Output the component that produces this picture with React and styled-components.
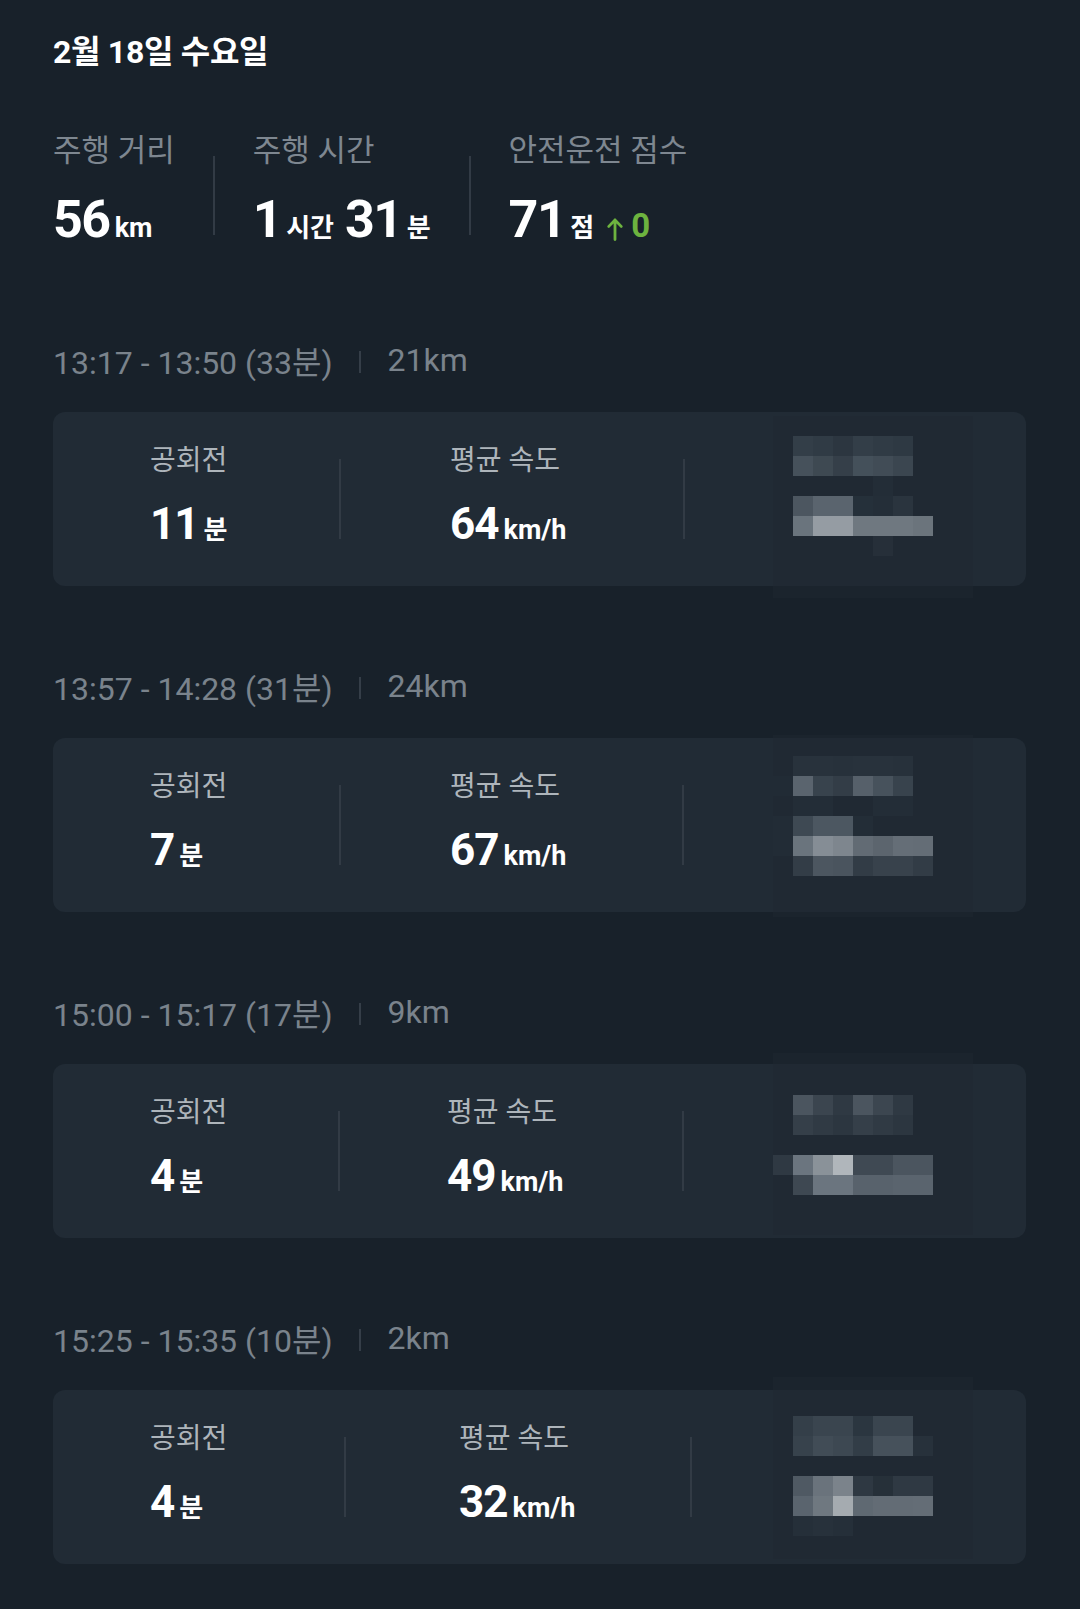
import React from "react"
import styled, { createGlobalStyle } from "styled-components"

const GlobalStyle = createGlobalStyle`
  body {
    margin: 0;
    background: #18212a;
  }
  * { box-sizing: border-box; }
`

const Page = styled.main`
  width: 1080px;
  min-height: 1609px;
  padding: 31px 54px 44px 53px;
  background: #18212a;
  color: #ffffff;
  font-family: Roboto, "Noto Sans CJK KR", sans-serif;
`

const DateTitle = styled.h1`
  margin: 0;
  font-size: 32px;
  line-height: 42px;
  font-weight: 700;
  letter-spacing: -0.3px;
`

const Summary = styled.section`
  display: flex;
  margin-top: 58px;
`

const SummaryItem = styled.div`
  display: flex;
  flex-direction: column;
  padding: 0 38px;
  &:first-child { padding-left: 0; }
`

const SummaryLabel = styled.div`
  font-size: 31px;
  line-height: 40px;
  color: #7e8790;
`

const SummaryValue = styled.div`
  display: flex;
  align-items: baseline;
  margin-top: 19px;
  height: 60px;
  line-height: 60px;
`

const BigNum = styled.span`
  font-size: 52px;
  font-weight: 700;
  letter-spacing: -1.5px;
`

const Unit = styled.span`
  font-size: ${p => p.$size || 26}px;
  font-weight: 700;
  margin-left: 5px;
  margin-right: ${p => p.$gap || 0}px;
`

const Delta = styled.span`
  display: inline-flex;
  align-items: baseline;
  margin-left: 13px;
  color: #6db33f;
  font-size: 33px;
  font-weight: 700;
  svg { margin-right: 8px; align-self: center; margin-top: 5px; }
`

const VDivider = styled.div`
  flex: none;
  width: 2px;
  height: ${p => p.$h}px;
  margin-top: ${p => p.$top}px;
  background: #323b45;
`

const Trips = styled.div`
  display: flex;
  flex-direction: column;
  gap: 80px;
  margin-top: 90px;
`

const Trip = styled.section``

const TripHeader = styled.div`
  display: flex;
  align-items: center;
  height: 40px;
  font-size: 32px;
  color: #7a838c;
`

const HeaderSep = styled.span`
  width: 2px;
  height: 22px;
  margin: 4px 27px 0 26px;
  background: #353e48;
`

const Card = styled.div`
  position: relative;
  display: flex;
  height: 174px;
  margin-top: 32px;
  border-radius: 12px;
  background: #212b35;
`

const Stat = styled.div`
  flex: none;
  width: ${p => p.$w}px;
  padding-left: ${p => p.$pad}px;
  padding-top: 31px;
`

const StatLabel = styled.div`
  font-size: 28px;
  line-height: 36px;
  color: #aeb5bb;
`

const StatValue = styled.div`
  display: flex;
  align-items: baseline;
  margin-top: 19px;
  height: 52px;
  line-height: 52px;
`

const MidNum = styled.span`
  font-size: 44px;
  font-weight: 700;
  letter-spacing: -1px;
`

// blurred map thumbnail, drawn as a mosaic over the card's right side
const Redacted = styled.div`
  position: absolute;
  left: 720px;
  top: ${p => p.$top}px;
  width: 200px;
  height: 182px;
  background: rgba(30, 39, 49, 0.45);
  svg { display: block; }
`

const ArrowUp = () => (
  <svg width="16" height="24" viewBox="0 0 16 24" fill="none">
    <path d="M8 22.5V3M1.8 9.4L8 3l6.2 6.4" stroke="#6db33f" strokeWidth="2.8" strokeLinecap="round" strokeLinejoin="round" />
  </svg>
)

const Mosaic = ({ rows, cellTop }) => (
  <svg width="200" height="182" viewBox="0 0 200 182">
    {rows.map((row, r) =>
      row.map((c, i) =>
        c ? <rect key={r + "-" + i} x={i * 20} y={cellTop + r * 20} width="20" height="20" fill={c} /> : null
      )
    )}
  </svg>
)

const trips = [
  {
    time: "13:17 - 13:50 (33분)", dist: "21km", idle: "11", speed: "64",
    cols: [286, 97, 342, 109],
    boxTop: 4, cellTop: 20,
    rows: [
      [null, "#333e48", "#303b45", "#2c3640", "#333e48", "#303b45", "#2e3943", null],
      [null, "#46515b", "#3e4952", "#353f49", "#44505a", "#414c56", "#3b4650", null],
      [null, null, null, null, null, "#232d37", null, null],
      [null, "#4c5660", "#5a646e", "#5a646e", "#25303a", "#242e38", "#2a343e", null],
      [null, "#6a747d", "#959ca3", "#959ca3", "#6f7880", "#6f7880", "#6f7880", "#6b747c"],
      [null, null, null, null, null, "#262f39", null, null],
    ],
  },
  {
    time: "13:57 - 14:28 (31분)", dist: "24km", idle: "7", speed: "67",
    cols: [286, 97, 341, 109],
    boxTop: -3, cellTop: 21,
    rows: [
      [null, "#28323c", "#28323c", "#27313b", "#28323c", "#28323c", "#27313b", null],
      ["#212b35", "#5a646e", "#38434d", "#333d47", "#56606a", "#47525c", "#38434d", null],
      [null, "#232d37", "#232d37", null, null, "#232d37", "#232d37", null],
      ["#222c36", "#3e4953", "#4c5761", "#4c5761", "#232d37", null, null, null],
      ["#222c36", "#6a747d", "#858d95", "#7e868e", "#626b74", "#5c656e", "#656e77", "#646d76"],
      [null, "#333d47", "#4c5660", "#4a545e", "#323c46", "#38424c", "#38424c", "#323c46"],
    ],
  },
  {
    time: "15:00 - 15:17 (17분)", dist: "9km", idle: "4", speed: "49",
    cols: [285, 97, 342, 107],
    boxTop: -11, cellTop: 42,
    rows: [
      [null, "#4b555f", "#3b454f", "#2f3943", "#4b555f", "#3c4650", "#2f3943", null],
      [null, "#353f49", "#303a44", "#2c3640", "#353f49", "#303a44", "#2c3640", null],
      [null, null, null, null, null, null, null, null],
      ["#2f3943", "#6b757f", "#8a9299", "#b0b6bb", "#3f4953", "#3f4953", "#4b555f", "#4b555f"],
      [null, "#3e4852", "#6b757f", "#6b757f", "#58626c", "#58626c", "#5a646e", "#5a646e"],
    ],
  },
  {
    time: "15:25 - 15:35 (10분)", dist: "2km", idle: "4", speed: "32",
    cols: [291, 97, 344, 113],
    boxTop: -13, cellTop: 39,
    rows: [
      [null, "#343f49", "#3a454f", "#3a454f", "#2b3640", "#3a454f", "#3a454f", null],
      [null, "#37424c", "#414c56", "#3d4852", "#323d47", "#46515b", "#46515b", "#27313b"],
      [null, null, null, null, null, null, null, null],
      [null, "#4f5963", "#6a737c", "#7b838b", "#2e3842", "#263039", "#2f3943", "#2f3943"],
      [null, "#5a646e", "#6f7880", "#a5abb0", "#5f6972", "#636c75", "#636c75", "#646d76"],
      [null, "#252f39", "#27313b", "#252f39", null, null, null, null],
    ],
  },
]

function App() {
  return (
    <Page>
      <GlobalStyle />
      <DateTitle>2월 18일 수요일</DateTitle>

      <Summary>
        <SummaryItem>
          <SummaryLabel>주행 거리</SummaryLabel>
          <SummaryValue><BigNum>56</BigNum><Unit $size={27}>km</Unit></SummaryValue>
        </SummaryItem>
        <VDivider $h={79} $top={25} />
        <SummaryItem>
          <SummaryLabel>주행 시간</SummaryLabel>
          <SummaryValue>
            <BigNum>1</BigNum><Unit $gap={11}>시간</Unit>
            <BigNum>31</BigNum><Unit>분</Unit>
          </SummaryValue>
        </SummaryItem>
        <VDivider $h={79} $top={25} />
        <SummaryItem>
          <SummaryLabel>안전운전 점수</SummaryLabel>
          <SummaryValue>
            <BigNum>71</BigNum><Unit>점</Unit>
            <Delta><ArrowUp />0</Delta>
          </SummaryValue>
        </SummaryItem>
      </Summary>

      <Trips>
        {trips.map(t => (
          <Trip key={t.time}>
            <TripHeader>
              <span>{t.time}</span>
              <HeaderSep />
              <span>{t.dist}</span>
            </TripHeader>
            <Card>
              <Stat $w={t.cols[0]} $pad={t.cols[1]}>
                <StatLabel>공회전</StatLabel>
                <StatValue><MidNum>{t.idle}</MidNum><Unit>분</Unit></StatValue>
              </Stat>
              <VDivider $h={80} $top={47} />
              <Stat $w={t.cols[2]} $pad={t.cols[3]}>
                <StatLabel>평균 속도</StatLabel>
                <StatValue><MidNum>{t.speed}</MidNum><Unit $size={27}>km/h</Unit></StatValue>
              </Stat>
              <VDivider $h={80} $top={47} />
              <Redacted $top={t.boxTop}>
                <Mosaic rows={t.rows} cellTop={t.cellTop} />
              </Redacted>
            </Card>
          </Trip>
        ))}
      </Trips>
    </Page>
  )
}

export default App
